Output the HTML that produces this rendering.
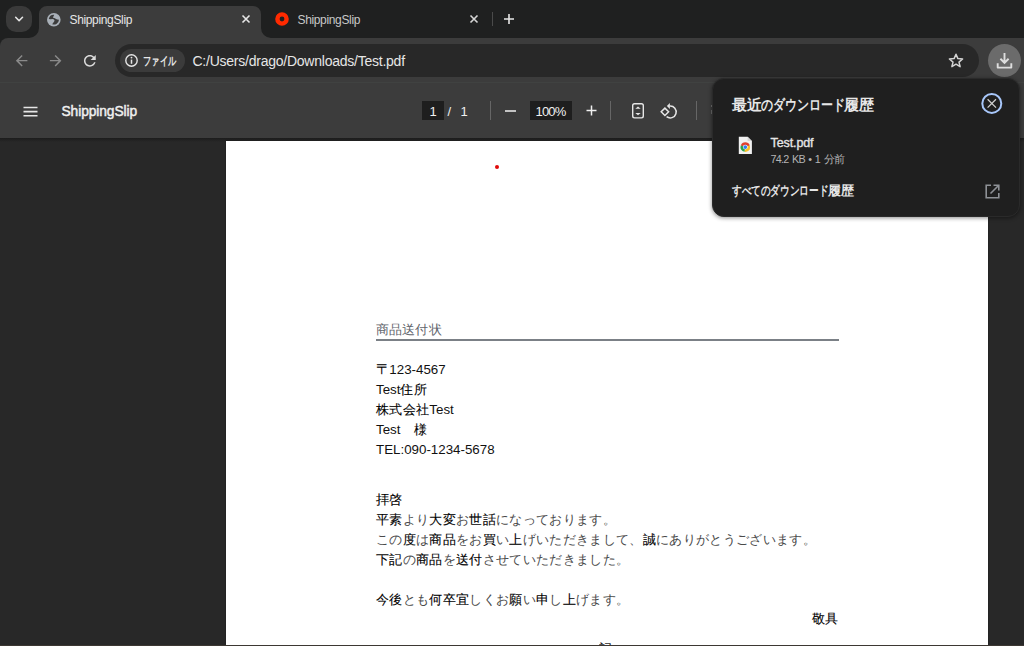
<!DOCTYPE html>
<html lang="ja">
<head>
<meta charset="utf-8">
<style>
*{box-sizing:border-box;margin:0;padding:0}
html,body{width:1024px;height:646px;overflow:hidden;background:#1f2020;font-family:"Liberation Sans",sans-serif;position:relative}
.abs{position:absolute}
svg{position:absolute;overflow:visible}
.t{white-space:pre;position:absolute;line-height:1}
.doc{position:absolute;left:376px;font-size:13.33px;line-height:20px;color:#111;white-space:pre}
i{font-style:normal}
.h{letter-spacing:0.33px;color:#000;-webkit-text-stroke:0.1px #000}
.k{letter-spacing:0.33px;color:#4a4a4a}
</style>
</head>
<body>
<!-- tab strip -->
<div class="abs" style="left:6px;top:6px;width:26px;height:26px;border-radius:10px;background:#3a3a3a"></div>
<svg style="left:0;top:0" width="40" height="40"><path d="M15.7 17.3 L19.1 20.7 L22.5 17.3" fill="none" stroke="#e6e6e6" stroke-width="1.6" stroke-linecap="round" stroke-linejoin="round"/></svg>

<!-- active tab -->
<svg style="left:0;top:0" width="280" height="40">
<path d="M29 38 A10 10 0 0 0 39 28 L39 14 A8 8 0 0 1 47 6 L253 6 A8 8 0 0 1 261 14 L261 28 A10 10 0 0 0 271 38 Z" fill="#3c3c3c"/>
</svg>
<svg style="left:47px;top:12.7px" width="14" height="14" viewBox="0 0 14 14">
<circle cx="6.8" cy="6.8" r="6.8" fill="#a9b0b8"/>
<path d="M7.2 1.7 A5.2 5.2 0 0 0 1.8 6.0 L3.7 6.3 L5.4 6.0 L6.6 6.2 L7.5 7.2 L7.2 8.6 L6.2 9.8 L5.2 11.3 A5.2 5.2 0 0 0 12.0 6.8 L10.4 6.6 L9.0 6.0 L7.9 5.3 L6.9 4.9 L6.0 4.6 L5.9 3.9 L6.5 3.4 L6.9 2.6 Z" fill="#3c3c3c"/>
</svg>
<div class="t" style="left:69.5px;top:14px;font-size:12px;color:#e6e6e6;letter-spacing:-0.35px">ShippingSlip</div>
<svg style="left:242px;top:15px" width="8" height="8"><path d="M0.5 0.5 L7.5 7.5 M7.5 0.5 L0.5 7.5" stroke="#e6e6e6" stroke-width="1.6"/></svg>

<!-- inactive tab -->
<svg style="left:275px;top:12px" width="14" height="14"><circle cx="7" cy="7" r="4.6" fill="none" stroke="#ff2a00" stroke-width="4.4"/></svg>
<div class="t" style="left:297.5px;top:14px;font-size:12px;color:#c8c8c8;letter-spacing:-0.35px">ShippingSlip</div>
<svg style="left:470px;top:15px" width="8" height="8"><path d="M0.5 0.5 L7.5 7.5 M7.5 0.5 L0.5 7.5" stroke="#d6d6d6" stroke-width="1.6"/></svg>
<div class="abs" style="left:492px;top:12px;width:1px;height:14px;background:#4a4a4a"></div>
<svg style="left:504px;top:14px" width="10" height="10"><path d="M5 0 V10 M0 5 H10" stroke="#e6e6e6" stroke-width="1.6"/></svg>

<!-- toolbar -->
<div class="abs" style="left:0;top:38px;width:1024px;height:44px;background:#3c3c3c;border-top-left-radius:8px"></div>
<svg style="left:12.6px;top:52.4px" width="24" height="24"><path transform="scale(0.72)" d="M20 11H7.83l5.59-5.59L12 4l-8 8 8 8 1.41-1.41L7.83 13H20v-2z" fill="#8a8a8a"/></svg>
<svg style="left:47.3px;top:52.4px" width="24" height="24"><path transform="translate(17.28,0) scale(-0.72,0.72)" d="M20 11H7.83l5.59-5.59L12 4l-8 8 8 8 1.41-1.41L7.83 13H20v-2z" fill="#8a8a8a"/></svg>
<svg style="left:81.35px;top:52.35px" width="24" height="24"><path transform="scale(0.7375)" d="M17.65 6.35C16.2 4.9 14.21 4 12 4c-4.42 0-7.99 3.58-7.99 8s3.57 8 7.99 8c3.73 0 6.84-2.55 7.73-6h-2.08c-.82 2.33-3.04 4-5.65 4-3.31 0-6-2.69-6-6s2.69-6 6-6c1.66 0 3.14.69 4.22 1.78L13 11h7V4l-2.35 2.35z" fill="#dcdcdc"/></svg>

<div class="abs" style="left:115px;top:44px;width:864px;height:33px;border-radius:16.5px;background:#282828"></div>
<div class="abs" style="left:120px;top:49px;width:65px;height:23px;border-radius:11.5px;background:#3b3b3b"></div>
<svg style="left:125.3px;top:54px" width="13" height="13"><circle cx="6.5" cy="6.5" r="5.7" fill="none" stroke="#e6e6e6" stroke-width="1.4"/><path d="M6.5 5.6 V9.8" stroke="#e6e6e6" stroke-width="1.5"/><circle cx="6.5" cy="3.6" r="0.9" fill="#e6e6e6"/></svg>
<div class="t" style="left:143px;top:54.8px;font-size:12px;font-weight:bold;color:#e6e6e6;transform:scaleX(0.69);transform-origin:0 0">ファイル</div>
<div class="t" style="left:192.5px;top:53.6px;font-size:14px;color:#e6e6e6;letter-spacing:-0.24px">C:/Users/drago/Downloads/Test.pdf</div>
<svg style="left:948px;top:53px" width="16" height="15" viewBox="0 0 16 15"><path d="M8 1.2 L9.9 5.6 L14.6 6 L11 9.1 L12.1 13.7 L8 11.2 L3.9 13.7 L5 9.1 L1.4 6 L6.1 5.6 Z" fill="none" stroke="#d4d4d4" stroke-width="1.5" stroke-linejoin="round"/></svg>
<div class="abs" style="left:988px;top:44px;width:33px;height:33px;border-radius:50%;background:#6b6b6b"></div>
<svg style="left:996px;top:52px" width="17" height="17"><path d="M8.5 1 V10.8 M4.4 6.8 L8.5 10.8 L12.6 6.8" fill="none" stroke="#dedede" stroke-width="1.9"/><path d="M1.7 11.2 V15.6 H15.3 V11.2" fill="none" stroke="#dedede" stroke-width="1.9" stroke-linejoin="round"/></svg>

<!-- pdf toolbar -->
<div class="abs" style="left:0;top:82px;width:1024px;height:1px;background:#404241"></div>
<div class="abs" style="left:0;top:83px;width:1024px;height:55px;background:#3c3c3c"></div>
<svg style="left:23.3px;top:105.5px" width="15" height="12"><path d="M0.5 1.5 H14.5 M0.5 5.6 H14.5 M0.5 9.7 H14.5" stroke="#e6e6e6" stroke-width="1.6"/></svg>
<div class="t" style="left:61.5px;top:104.5px;font-size:13.8px;font-weight:normal;-webkit-text-stroke:0.45px #f0f0f0;color:#f0f0f0;letter-spacing:-0.1px">ShippingSlip</div>

<div class="abs" style="left:422px;top:101px;width:22px;height:19px;background:#1e1e1e"></div>
<div class="t" style="left:429.5px;top:104.5px;font-size:13px;color:#f0f0f0">1</div>
<div class="t" style="left:447.5px;top:104.5px;font-size:13px;color:#f0f0f0">/</div>
<div class="t" style="left:460.5px;top:104.5px;font-size:13px;color:#f0f0f0">1</div>
<div class="abs" style="left:490px;top:101px;width:1px;height:19px;background:#666"></div>
<svg style="left:505px;top:110px" width="12" height="2"><path d="M0 1 H11" stroke="#f0f0f0" stroke-width="1.5"/></svg>
<div class="abs" style="left:530px;top:101px;width:42px;height:19px;background:#1e1e1e"></div>
<div class="t" style="left:535.5px;top:104.5px;font-size:13px;color:#f0f0f0;letter-spacing:-0.8px">100%</div>
<svg style="left:586px;top:105px" width="12" height="12"><path d="M5.5 0.5 V10.5 M0.5 5.5 H10.5" stroke="#f0f0f0" stroke-width="1.5"/></svg>
<div class="abs" style="left:610px;top:101px;width:1px;height:19px;background:#666"></div>
<svg style="left:631px;top:102px" width="14" height="18"><rect x="1.7" y="1.7" width="10.6" height="14.2" rx="1.8" fill="none" stroke="#e6e6e6" stroke-width="1.4"/><path d="M4.3 6.7 L7 4.5 L9.7 6.7 Z M4.3 11.1 L7 13.3 L9.7 11.1 Z" fill="#e6e6e6"/></svg>
<svg style="left:659px;top:102px" width="19" height="18"><path d="M10.8 4.1 A5.9 5.9 0 1 1 7.6 14.6" fill="none" stroke="#e6e6e6" stroke-width="1.5"/><path d="M10.9 0.9 L7.9 3.9 L10.9 6.9 Z" fill="#e6e6e6"/><path d="M5.9 6.1 L9.6 9.8 L5.9 13.5 L2.2 9.8 Z" fill="none" stroke="#e6e6e6" stroke-width="1.5"/></svg>
<div class="abs" style="left:696px;top:101px;width:1px;height:19px;background:#666"></div>

<!-- pdf area -->
<div class="abs" style="left:0;top:138px;width:1024px;height:508px;background:#282828"></div>
<div class="abs" style="left:0;top:138px;width:1024px;height:4px;background:linear-gradient(#1c1c1c,#282828)"></div>
<div class="abs" style="left:226px;top:141px;width:761.5px;height:504px;background:#fff;box-shadow:0 0 2px rgba(0,0,0,0.35)"></div>
<div class="abs" style="left:494.7px;top:165px;width:4px;height:4px;border-radius:50%;background:#e00a0a"></div>

<div class="t" style="left:375.5px;top:322.5px;font-size:13.33px;letter-spacing:0.33px;color:#5f656c">商品送付状</div>
<div class="abs" style="left:376px;top:339px;width:463px;height:2px;background:#7b8086"></div>

<div class="doc" style="top:360px"><i class="h" style="display:inline-block;transform:scale(1.14,1.08);transform-origin:0 60%;margin-right:0">〒</i>123-4567
Test<i class="h">住所</i>
<i class="h">株式会社</i>Test
Test<i class="k">　</i><i class="h">様</i>
TEL:090-1234-5678</div>

<div class="doc" style="top:490px"><i class="h">拝啓</i>
<i class="h">平素</i><i class="k">より</i><i class="h">大変</i><i class="k">お</i><i class="h">世話</i><i class="k">になっております。</i>
<i class="k">この</i><i class="h">度</i><i class="k">は</i><i class="h">商品</i><i class="k">をお</i><i class="h">買</i><i class="k">い</i><i class="h">上</i><i class="k">げいただきまして、</i><i class="h">誠</i><i class="k">にありがとうございます。</i>
<i class="h">下記</i><i class="k">の</i><i class="h">商品</i><i class="k">を</i><i class="h">送付</i><i class="k">させていただきました。</i>

<i class="h">今後</i><i class="k">とも</i><i class="h">何卒宜</i><i class="k">しくお</i><i class="h">願</i><i class="k">い</i><i class="h">申</i><i class="k">し</i><i class="h">上</i><i class="k">げます。</i></div>
<div class="doc" style="left:811.5px;top:609px"><i class="h">敬具</i></div>

<div class="abs" style="left:599px;top:640px;width:20px;height:5px;overflow:hidden"><div class="doc" style="left:0;top:-1px"><i class="h">記</i></div></div>
<div class="abs" style="left:0;top:645px;width:1024px;height:1px;background:#3d3833"></div>

<!-- popup -->
<div class="abs" style="left:711.5px;top:77.5px;width:308.8px;height:139px;border-radius:12px;background:#1f1f1f;border:1px solid #2a2a2a;box-shadow:0 1px 4px rgba(0,0,0,0.45)"></div>
<div class="abs" style="left:710.5px;top:104.5px;width:1.5px;height:2px;background:#5a5a5a"></div><div class="abs" style="left:710.5px;top:109.5px;width:1.5px;height:4px;background:#555"></div>
<div class="t" style="left:732px;top:97.5px;font-size:14.5px;font-weight:bold;color:#e6e6e6">最近</div>
<div class="t" style="left:761px;top:97.5px;font-size:14.5px;font-weight:bold;color:#e6e6e6;transform:scaleX(0.8);transform-origin:0 0">のダウンロード</div>
<div class="t" style="left:843.5px;top:97.5px;font-size:14.5px;font-weight:bold;color:#e6e6e6">履歴</div>
<svg style="left:981px;top:93px" width="22" height="22"><circle cx="10.8" cy="10.4" r="9.5" fill="none" stroke="#a8c7fa" stroke-width="2"/><path d="M6.6 6.2 L15 14.6 M15 6.2 L6.6 14.6" stroke="#d0d0d0" stroke-width="1.25"/></svg>

<svg style="left:738px;top:136px" width="15" height="19"><path d="M0.8 0.8 H9.6 L13.9 5.1 V18 H0.8 Z" fill="#f1f1f1"/><path d="M9.6 0.8 V5.1 H13.9 Z" fill="#d6d6d6"/>
<path d="M7.3 11.1 L2.79 9.46 A4.8 4.8 0 0 1 11.81 9.46 Z" fill="#e0412f"/><path d="M7.3 11.1 L11.81 9.46 A4.8 4.8 0 0 1 6.47 15.83 Z" fill="#f6c026"/><path d="M7.3 11.1 L6.47 15.83 A4.8 4.8 0 0 1 2.79 9.46 Z" fill="#2ba24c"/><circle cx="7.3" cy="11.1" r="2.4" fill="#fff"/><circle cx="7.3" cy="11.1" r="1.85" fill="#2f7cf0"/></svg>
<div class="t" style="left:770.5px;top:137px;font-size:12.5px;font-weight:normal;-webkit-text-stroke:0.35px #e6e6e6;color:#e6e6e6;letter-spacing:-0.1px">Test.pdf</div>
<div class="t" style="left:770.5px;top:154.3px;font-size:10.8px;color:#b4b4b4;letter-spacing:-0.75px;word-spacing:1.2px">74.2 KB • 1 分前</div>
<div class="t" style="left:732px;top:184.8px;font-size:12.5px;font-weight:bold;color:#e6e6e6;transform:scaleX(0.74);transform-origin:0 0">すべてのダウンロード</div>
<div class="t" style="left:828px;top:184.8px;font-size:12.5px;font-weight:bold;color:#e6e6e6">履歴</div>
<svg style="left:985px;top:184px" width="15" height="15"><path d="M6 1.2 H1.2 V13.8 H13.8 V9" fill="none" stroke="#8e9196" stroke-width="1.6"/><path d="M8.5 1.2 H13.8 V6.5 M13.8 1.2 L5.5 9.5" fill="none" stroke="#8e9196" stroke-width="1.6"/></svg>
</body>
</html>
